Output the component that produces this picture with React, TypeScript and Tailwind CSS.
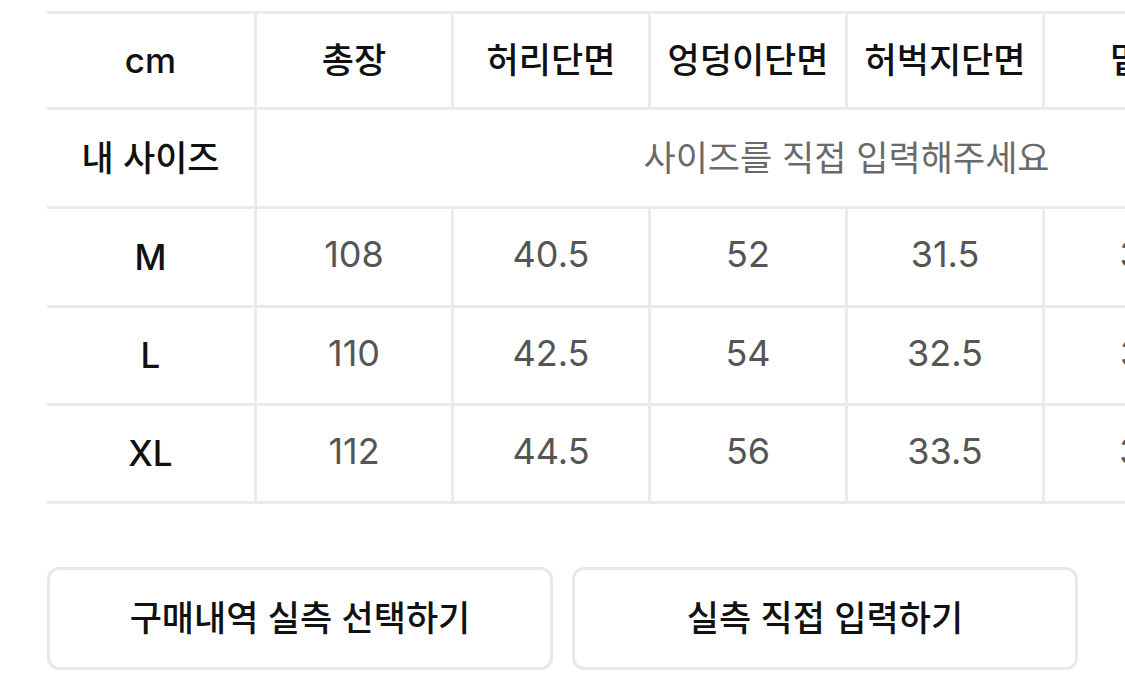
import React from "react";

const headers = ["총장", "허리단면", "엉덩이단면", "허벅지단면", "밑위", "밑단단면"];
const rows: { size: string; values: string[] }[] = [
  { size: "M", values: ["108", "40.5", "52", "31.5", "30", "19.5"] },
  { size: "L", values: ["110", "42.5", "54", "32.5", "32", "20.5"] },
  { size: "XL", values: ["112", "44.5", "56", "33.5", "34", "21.5"] },
];

export default function App() {
  return (
    <div className="w-[1125px] h-[690px] overflow-hidden bg-white font-['Inter','Noto_Sans_CJK_KR',sans-serif]">
      <div className="pl-[47px] pt-[11px] overflow-hidden">
        <div className="w-max">
          {/* header row */}
          <div className="flex h-[99px] border-y-[3px] border-[#ebebeb]">
            <div className="w-[207px] flex items-center justify-center text-[35px] font-medium text-[#111]">
              cm
            </div>
            {headers.map((h) => (
              <div
                key={h}
                className="w-[197px] border-l-[3px] border-[#ebebeb] flex items-center justify-center text-[35px] font-medium text-[#111] whitespace-nowrap"
              >
                {h}
              </div>
            ))}
          </div>
          {/* my size row */}
          <div className="flex h-[99px] border-b-[3px] border-[#ebebeb]">
            <div className="w-[207px] flex items-center justify-center text-[35px] font-medium text-[#111]">
              내 사이즈
            </div>
            <div className="w-[1182px] border-l-[3px] border-[#ebebeb] flex items-center justify-center text-[35px] text-[#6a6a6a]">
              사이즈를 직접 입력해주세요
            </div>
          </div>
          {rows.map((r, i) => (
            <div
              key={r.size}
              className={
                i === 0
                  ? "flex h-[99px] border-b-[3px] border-[#ebebeb]"
                  : "flex h-[98px] border-b-[3px] border-[#ebebeb]"
              }
            >
              <div className="w-[207px] flex items-center justify-center text-[35px] font-medium text-[#111]">
                {r.size}
              </div>
              {r.values.map((v, j) => (
                <div
                  key={j}
                  className="w-[197px] border-l-[3px] border-[#ebebeb] flex items-center justify-center pb-[6px] text-[36px] text-[#555]"
                >
                  {v}
                </div>
              ))}
            </div>
          ))}
        </div>
      </div>
      <div className="flex gap-[19px] px-[47px] mt-[63px]">
        <button className="flex-1 h-[103px] rounded-[12px] border-[3px] border-[#e8e8e8] bg-white flex items-center justify-center text-[35px] font-medium text-[#111]">
          구매내역 실측 선택하기
        </button>
        <button className="flex-1 h-[103px] rounded-[12px] border-[3px] border-[#e8e8e8] bg-white flex items-center justify-center text-[35px] font-medium text-[#111]">
          실측 직접 입력하기
        </button>
      </div>
    </div>
  );
}
